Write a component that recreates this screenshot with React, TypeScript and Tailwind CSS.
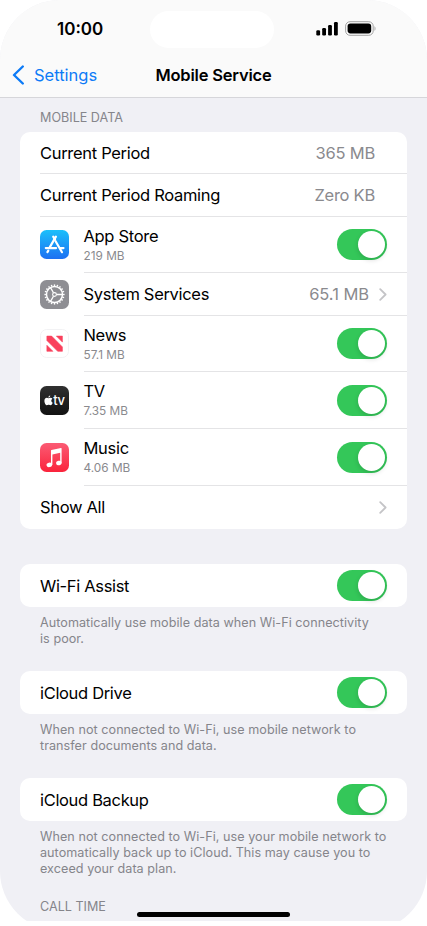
import React, { useState } from 'react';

const Toggle: React.FC<{ label: string }> = ({ label }) => {
  const [on, setOn] = useState(true);

  return (
    <button
      role="switch"
      aria-checked={on}
      aria-label={label}
      onClick={() => setOn(!on)}
      className={`flex h-[31px] w-[50.5px] shrink-0 items-center rounded-full p-[2px] ${on ? 'justify-end bg-[#34c759]' : 'justify-start bg-[#e9e9eb]'}`}
    >
      <span className="size-[27px] rounded-full bg-white shadow-[0_2px_5px_rgba(0,0,0,0.15)]" />
    </button>
  );
};

const Chevron = () => (
  <svg width="8" height="13" viewBox="0 0 8 13" fill="none" stroke="#c4c4c7" strokeWidth="1.8" strokeLinecap="round" strokeLinejoin="round">
    <path d="M1.2 1.2 6.6 6.5 1.2 11.8" />
  </svg>
);

// --- APP ICONS ---

const AppStoreIcon = () => (
  <svg width="29" height="29" viewBox="0 0 29 29">
    <defs>
      <linearGradient id="store" x1="0" y1="0" x2="0" y2="1">
        <stop offset="0" stopColor="#1bc0fb" />
        <stop offset="1" stopColor="#1d70f2" />
      </linearGradient>
    </defs>
    <rect width="29" height="29" rx="6.5" fill="url(#store)" />
    <g stroke="#fff" strokeWidth="2.2" strokeLinecap="round" fill="none">
      <path d="M15.9 6.6 9.7 17.4" />
      <path d="M13.2 6.6 15 9.6M15.6 11.2 22 22.2" />
      <path d="M5.8 18.1H16.1M20.2 18.1H23.5" />
      <path d="M8.3 20.6 7.4 22.1" />
    </g>
  </svg>
);

const TEETH = Array.from({ length: 20 }, (_, i) => i * 18);

const GearIcon = () => (
  <svg width="29" height="29" viewBox="0 0 29 29">
    <rect width="29" height="29" rx="6.5" fill="#8e8e93" />
    <g stroke="#fff" fill="none">
      <circle cx="14.5" cy="14.5" r="8" strokeWidth="1.5" />
      {TEETH.map(a => (
        <path key={a} d="M14.5 4.4V6.1" strokeWidth="1.4" transform={`rotate(${a} 14.5 14.5)`} />
      ))}
      <circle cx="14.5" cy="14.5" r="1.9" strokeWidth="1.1" />
      <path d="M16.5 14.5H22.4M13.5 12.8 10.5 7.6M13.5 16.2 10.5 21.4" strokeWidth="1.3" />
    </g>
  </svg>
);

const NewsIcon = () => (
  <svg width="29" height="29" viewBox="0 0 29 29">
    <rect x="0.5" y="0.5" width="28" height="28" rx="6.2" fill="#fff" stroke="#f2f2f4" />
    <g fill="#f9415c" stroke="#f9415c" strokeWidth="0.6" strokeLinejoin="round">
      <path d="M6.9 7.1H11.6L22.4 17.9V22.3H17.7L6.9 11.5Z" />
      <path d="M16.4 7.1H22.4V13.1Z" />
      <path d="M6.9 16.3 12.9 22.3H6.9Z" />
    </g>
  </svg>
);

const TvIcon = () => (
  <svg width="29" height="29" viewBox="0 0 29 29">
    <defs>
      <linearGradient id="tv" x1="0" y1="0" x2="0" y2="1">
        <stop offset="0" stopColor="#303030" />
        <stop offset="1" stopColor="#121212" />
      </linearGradient>
    </defs>
    <rect width="29" height="29" rx="6.5" fill="url(#tv)" />
    <g fill="#fff">
      <path d="M10.2 9.4c.1 1.1-.8 2.1-1.8 2.1-.1-1.1.8-2 1.8-2.1Z" />
      <path d="M8.5 12.3c.5 0 1.1-.5 2-.5.8 0 1.5.4 1.9 1-1.7 1-1.4 3.3.3 4-.5 1.2-1.2 2.4-2.2 2.4-.7 0-.9-.4-1.8-.4s-1.1.4-1.8.4c-1.2 0-2.5-2.3-2.5-4.3 0-2 1.2-3.1 2.5-3.1.7 0 1.2.5 1.6.5Z" />
      <text x="13.2" y="18.8" fontFamily="Inter" fontSize="13" fontWeight="500">tv</text>
    </g>
  </svg>
);

const MusicIcon = () => (
  <svg width="29" height="29" viewBox="0 0 29 29">
    <defs>
      <linearGradient id="music" x1="0" y1="0" x2="0" y2="1">
        <stop offset="0" stopColor="#fb5b74" />
        <stop offset="1" stopColor="#fa233b" />
      </linearGradient>
    </defs>
    <rect width="29" height="29" rx="6.5" fill="url(#music)" />
    <g fill="#fff">
      <path d="M11.4 7 21 5c.4-.1.6.1.6.5V19.8H20.2V9.8L12.4 11.4V21.9H11V7.6c0-.3.1-.5.4-.6Z" />
      <ellipse cx="9.3" cy="21.9" rx="2.8" ry="2.2" transform="rotate(-14 9.3 21.9)" />
      <ellipse cx="18.9" cy="20" rx="2.8" ry="2.2" transform="rotate(-14 18.9 20)" />
    </g>
  </svg>
);

// --- ROWS ---

const APPS = [
  { name: 'App Store', usage: '219 MB', icon: <AppStoreIcon />, height: 'h-14' },
  { name: 'System Services', total: '65.1 MB', icon: <GearIcon />, height: 'h-[43px]' },
  { name: 'News', usage: '57.1 MB', icon: <NewsIcon />, height: 'h-14' },
  { name: 'TV', usage: '7.35 MB', icon: <TvIcon />, height: 'h-[57px]' },
  { name: 'Music', usage: '4.06 MB', icon: <MusicIcon />, height: 'h-[57px]' },
];

const OPTIONS = [
  {
    name: 'Wi-Fi Assist',
    note: ['Automatically use mobile data when Wi-Fi connectivity', 'is poor.'],
  },
  {
    name: 'iCloud Drive',
    note: ['When not connected to Wi-Fi, use mobile network to', 'transfer documents and data.'],
  },
  {
    name: 'iCloud Backup',
    note: ['When not connected to Wi-Fi, use your mobile network to', 'automatically back up to iCloud. This may cause you to', 'exceed your data plan.'],
  },
];

const StatusBar = () => (
  <div className="grid h-[54px] grid-cols-[150px_124px_1fr]">
    <span className="pl-[57px] pt-[18px] text-[17px] font-semibold leading-[22px]">10:00</span>
    <span className="mt-[11px] h-[37px] rounded-full bg-white" />
    <div className="flex items-start gap-[7px] pl-[42px] pt-[21px]">
      <svg width="22" height="15" viewBox="0 0 22 15">
        <rect x="0.3" y="9.2" width="3.8" height="5.2" rx="1.2" />
        <rect x="6.2" y="7" width="3.8" height="7.4" rx="1.2" />
        <rect x="12.1" y="4" width="3.8" height="10.4" rx="1.2" />
        <rect x="18" y="1" width="3.8" height="13.4" rx="1.2" />
      </svg>
      <svg width="32" height="15" viewBox="0 0 32 15">
        <rect x="0.6" y="0.7" width="27.6" height="13.6" rx="4.4" fill="none" stroke="#a3a3a3" />
        <rect x="2.6" y="2.6" width="23.6" height="9.8" rx="2.8" />
        <path d="M29.5 5.2c1.3.6 1.3 4 0 4.6Z" fill="#a3a3a3" />
      </svg>
    </div>
  </div>
);

export default function App() {
  return (
    <div className="h-[926px] w-[427px] bg-white font-['Inter',sans-serif] text-black">
      <div className="h-[921px] overflow-hidden">
        <div className="h-[931px] overflow-hidden rounded-[60px] bg-[#f0f0f5]">
          <header className="h-[98px] border-b border-[#d6d6da] bg-[#fafafa]">
            <StatusBar />
            <nav className="grid h-[42px] grid-cols-[1fr_auto_1fr] items-center">
              <a className="flex items-center gap-[10px] pl-3 text-[16.5px] leading-[22px] text-[#0d7bf7]">
                <svg width="12" height="20" viewBox="0 0 12 20" fill="none" stroke="#0d7bf7" strokeWidth="2.4" strokeLinecap="round" strokeLinejoin="round">
                  <path d="M10.8 1.5 2 10l8.8 8.5" />
                </svg>
                Settings
              </a>
              <h1 className="text-[16.5px] font-semibold leading-[22px] tracking-[-0.2px]">Mobile Service</h1>
            </nav>
          </header>

          <main className="px-5">
            <h2 className="px-5 pt-3 text-[12.6px] leading-4 text-[#85858b]">MOBILE DATA</h2>

            <section className="mt-[6px] h-[397px] rounded-[10px] bg-white pl-5 text-[16.5px] leading-[22px] tracking-[-0.31px]">
              <div className="flex h-[42px] items-center justify-between border-b border-[#e4e4e6] pr-8 pt-px">
                <span>Current Period</span>
                <span className="tracking-[-0.2px] text-[#8a8a8e]">365 MB</span>
              </div>
              <div className="flex h-[43px] items-center justify-between border-b border-[#e4e4e6] pr-8">
                <span>Current Period Roaming</span>
                <span className="tracking-[-0.25px] text-[#8a8a8e]">Zero KB</span>
              </div>
              {APPS.map(app => (
                <div key={app.name} className={`flex items-center gap-[15px] ${app.height}`}>
                  <span className="-ml-[0.5px] -mt-px">{app.icon}</span>
                  <div className="flex h-full flex-1 items-center justify-between border-b border-[#e4e4e6] pr-5">
                    <div>
                      <p>{app.name}</p>
                      {app.usage && <p className="text-[11.8px] leading-[18px] tracking-[0px] text-[#8a8a8e]">{app.usage}</p>}
                    </div>
                    {app.total ? (
                      <div className="flex items-center gap-[10px] tracking-[-0.05px] text-[#8a8a8e]">
                        {app.total}
                        <Chevron />
                      </div>
                    ) : (
                      <Toggle label={app.name} />
                    )}
                  </div>
                </div>
              ))}
              <div className="flex h-[42px] items-center justify-between pr-5">
                <span>Show All</span>
                <Chevron />
              </div>
            </section>

            <div className="mt-[35px] flex flex-col">
              {OPTIONS.map(option => (
                <section key={option.name} className="mb-6">
                  <div className="flex h-[43px] items-center justify-between rounded-[10px] bg-white px-5">
                    <span className="pt-0.5 text-[16.5px] tracking-[-0.33px]">{option.name}</span>
                    <Toggle label={option.name} />
                  </div>
                  <p className="whitespace-nowrap pl-5 pt-2 text-[12.6px] leading-4 tracking-[0.05px] text-[#85858b]">
                    {option.note.map(line => (
                      <span key={line} className="block">{line}</span>
                    ))}
                  </p>
                </section>
              ))}
            </div>

            <div className="relative -mt-[2px]">
              <h2 className="pl-5 text-[12.6px] leading-4 text-[#85858b]">CALL TIME</h2>
              {/* Home indicator */}
              <span className="absolute left-[117px] top-[13px] h-[5px] w-[153px] rounded-full bg-black" />
            </div>
          </main>
        </div>
      </div>
    </div>
  );
}
